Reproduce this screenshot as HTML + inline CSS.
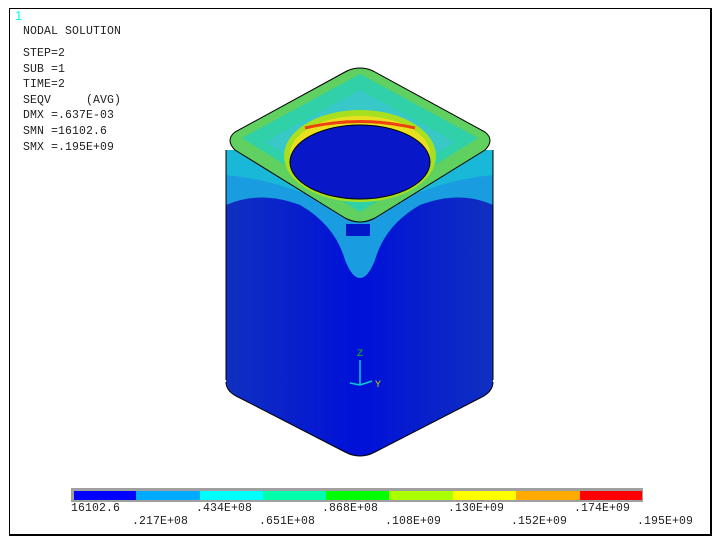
<!DOCTYPE html>
<html><head><style>
body{margin:0;background:#fff;width:718px;height:544px;overflow:hidden;position:relative;font-family:"Liberation Mono",monospace}
.t{position:absolute;font-size:11.5px;color:#222;white-space:pre;font-family:"Liberation Mono",monospace;letter-spacing:0.1px}
</style></head><body>
<div style="position:absolute;left:9px;top:8px;width:700px;height:525px;border:1px solid #000;border-right:2px solid #000;border-bottom:2px solid #000"></div>
<div class="t" style="left:15px;top:8px;color:#0ff;font-size:13px;font-family:'Liberation Sans',sans-serif">1</div>
<div class="t" style="left:23px;top:24px;line-height:16px">NODAL SOLUTION</div>
<div class="t" style="left:23px;top:46px;line-height:15.6px">STEP=2
SUB =1
TIME=2
SEQV     (AVG)
DMX =.637E-03
SMN =16102.6
SMX =.195E+09</div>
<svg width="718" height="544" style="position:absolute;left:0;top:0">
<defs>
<linearGradient id="side" x1="0" x2="1"><stop offset="0" stop-color="#1030c0"/><stop offset=".5" stop-color="#0010d8"/><stop offset="1" stop-color="#1030c0"/></linearGradient>
</defs>
<path d="M226,150 L226,380 Q226,392 240,398 L345,452 Q360,460 375,452 L480,398 Q493,392 493,380 L493,150 Z" fill="url(#side)"/>
<path d="M226,150 L226,205 Q260,190 300,205 Q335,225 345,260 Q352,278 360,278 Q368,278 375,260 Q385,225 420,205 Q460,190 493,205 L493,150 Z" fill="#1a9de0"/>
<path d="M226,150 L226,175 Q280,180 330,205 L390,205 Q440,180 493,175 L493,150 Z" fill="#1ab8d8"/>
<path d="M346,224 h24 v12 h-24z" fill="#0018c8"/>
<path d="M360,68 Q368,68 375,72 L485,132 Q495,140 485,150 L375,218 Q360,226 345,218 L235,150 Q225,140 235,132 L345,72 Q352,68 360,68Z" fill="#60d060" stroke="#000" stroke-width="1"/>
<path d="M360,74 L478,138 L360,212 L242,138Z" fill="#30d0a8"/>
<path d="M360,90 L455,142 L360,200 L265,142Z" fill="#38c8c8"/>
<ellipse cx="360" cy="156" rx="76" ry="46" fill="#a8e020"/>
<ellipse cx="360" cy="154" rx="70" ry="38" fill="#e8e020"/>
<path d="M305,128 Q360,115 415,128" stroke="#f04010" stroke-width="3" fill="none"/>
<ellipse cx="360" cy="162" rx="70" ry="37" fill="#0818c8" stroke="#000"/>
<path d="M226,382 Q226,392 240,398 L345,452 Q360,460 375,452 L480,398 Q493,392 493,382" stroke="#000" fill="none"/>
<path d="M226,150 L226,380 M493,150 L493,380" stroke="#000" stroke-width="1"/>
<text x="357" y="356" fill="#0c0" font-size="10" font-family="Liberation Mono">Z</text>
<text x="375" y="387" fill="#cc0" font-size="10" font-family="Liberation Mono">Y</text>
<path d="M360,385 v-25 M360,385 l12,-4 M360,385 l-10,-2" stroke="#0cc" stroke-width="1.5"/>
</svg>
<div style="position:absolute;left:71px;top:488px;width:572px;height:14px;background:#a0a0a0"></div>
<div style="position:absolute;left:74px;top:491px;height:9px;display:flex">
<div style="width:62px;background:#0000ff"></div><div style="width:64px;background:#00aaff"></div><div style="width:63px;background:#00ffff"></div><div style="width:63px;background:#00ffaa"></div><div style="width:63px;background:#00ff00"></div><div style="width:64px;background:#aaff00"></div><div style="width:63px;background:#ffff00"></div><div style="width:64px;background:#ffaa00"></div><div style="width:62px;background:#ff0000"></div></div>
<div class="t" style="left:71px;top:502px">16102.6</div>
<div class="t" style="left:132px;top:515px">.217E+08</div>
<div class="t" style="left:196px;top:502px">.434E+08</div>
<div class="t" style="left:259px;top:515px">.651E+08</div>
<div class="t" style="left:322px;top:502px">.868E+08</div>
<div class="t" style="left:385px;top:515px">.108E+09</div>
<div class="t" style="left:448px;top:502px">.130E+09</div>
<div class="t" style="left:511px;top:515px">.152E+09</div>
<div class="t" style="left:574px;top:502px">.174E+09</div>
<div class="t" style="left:637px;top:515px">.195E+09</div>
</body></html>
